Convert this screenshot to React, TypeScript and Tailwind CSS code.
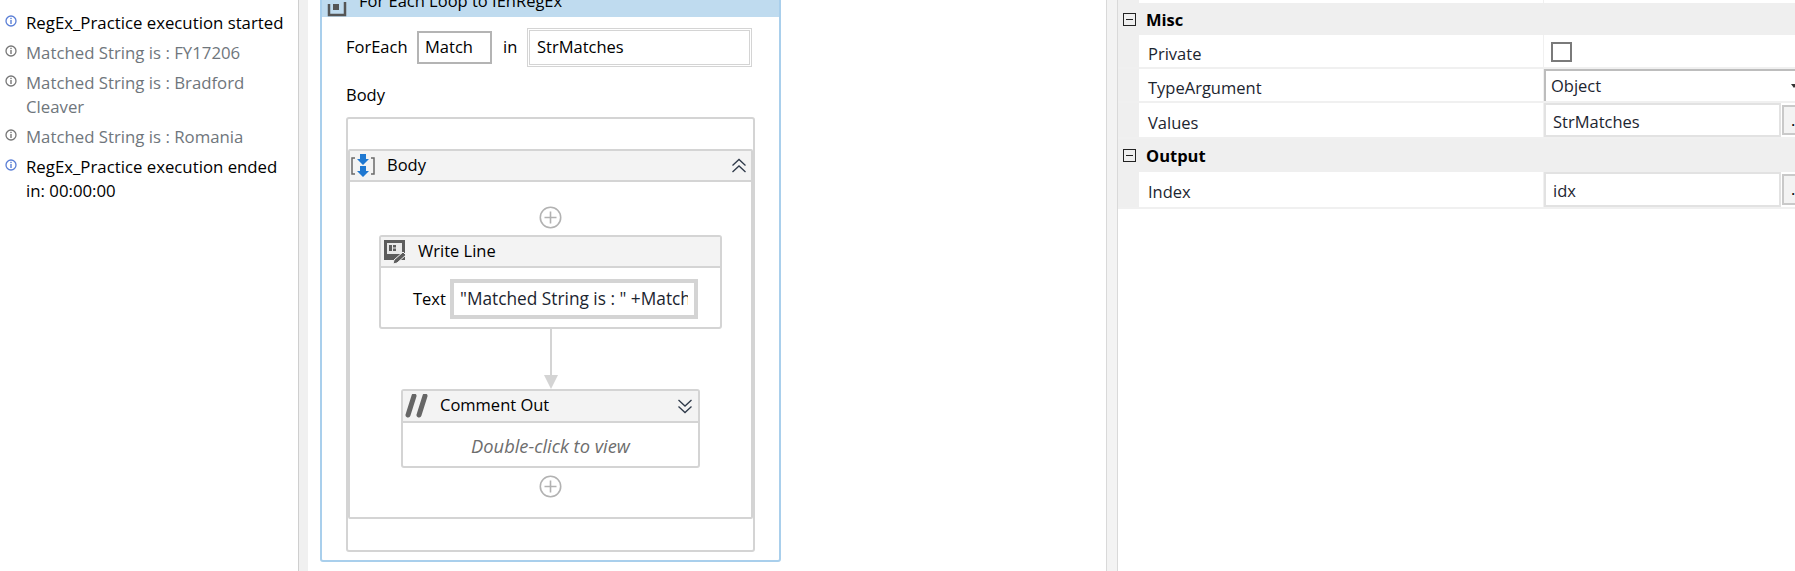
import type { ReactNode } from "react";

function InfoIcon({ active }: { active: boolean }) {
  const c = active ? "#5b7fd6" : "#777777";
  return (
    <svg width="12" height="12" viewBox="0 0 12 12" className="shrink-0">
      <circle cx="6" cy="6" r="5" fill="white" stroke={c} strokeWidth="1.3" />
      <rect x="5.3" y="5" width="1.4" height="4" fill={c} />
      <rect x="5.3" y="2.8" width="1.4" height="1.3" fill={c} />
    </svg>
  );
}

function LogRow({ active, children }: { active?: boolean; children: ReactNode }) {
  return (
    <div className={`flex ${active ? "text-black" : "text-[#6f767c]"}`}>
      <div className="w-[21px] shrink-0 pt-[5px]">
        <InfoIcon active={!!active} />
      </div>
      <div className="w-[265px] pt-px text-[16.8px] leading-[24px]">{children}</div>
    </div>
  );
}

function PlusCircle() {
  return (
    <svg width="23" height="23" viewBox="0 0 23 23" className="shrink-0">
      <circle cx="11.500" cy="11.500" r="10.200" fill="white" stroke="#b2b2b2" strokeWidth="1.600" />
      <path d="M11.500 5.500v12M5.500 11.500h12" stroke="#b2b2b2" strokeWidth="1.600" />
    </svg>
  );
}

function Chevrons({ up }: { up?: boolean }) {
  return (
    <svg width="16" height="16" viewBox="0 0 16 16" className={`shrink-0 ${up ? "" : "rotate-180"}`}>
      <path d="M1.500 7.500 8 1.500l6.500 6M1.500 14 8 8l6.500 6" fill="none" stroke="#2f3a4a" strokeWidth="1.300" />
    </svg>
  );
}

function BodyIcon() {
  return (
    <svg width="26" height="26" viewBox="0 0 26 26" className="shrink-0">
      <path d="M5 5H2v16h3M21 5h3v16h-3" fill="none" stroke="#6a6a6a" strokeWidth="1.500" />
      <path d="M10 1h6v5h3l-6 6-6-6h3z" fill="#1f78d1" />
      <path d="M10 13h6v5h3l-6 6-6-6h3z" fill="#1f78d1" />
    </svg>
  );
}

function WriteLineIcon() {
  return (
    <svg width="23" height="24" viewBox="0 0 23 24" className="shrink-0">
      <rect x="0" y="0" width="21" height="20" fill="#5c5c5c" />
      <rect x="3" y="3" width="15" height="11" fill="#e8e8e8" />
      <path d="M5 5h3v6H5zM9 5h3v2.500H9zM9 8.500h3V11H9z" fill="#5c5c5c" />
      <path d="m10 20 9-8 3 3-9 8-4 1z" fill="#5c5c5c" stroke="#f3f3f3" strokeWidth="1" />
    </svg>
  );
}

function CommentIcon() {
  return (
    <svg width="24" height="24" viewBox="0 0 24 24" className="shrink-0">
      <path d="M9 2 3 21M20 2l-6 19" stroke="#666666" strokeWidth="5" strokeLinecap="round" />
    </svg>
  );
}

function ForEachIcon() {
  return (
    <svg width="20" height="31" viewBox="0 0 20 31" className="shrink-0">
      <path d="M2 18v11h16V16" fill="none" stroke="#555555" strokeWidth="2.500" />
      <path d="M6 18h6v6H6z" fill="#555555" />
    </svg>
  );
}

function MinusBox() {
  return (
    <div className="flex h-[13px] w-[13px] items-center justify-center border border-[#222222] bg-[#efefef]">
      <div className="h-px w-[7px] bg-[#222222]" />
    </div>
  );
}

function SectionRow({ label, height }: { label: string; height: string }) {
  return (
    <div className={`flex items-center bg-[#efefef] ${height}`}>
      <div className="flex w-[28px] shrink-0 justify-start pl-[5px]">
        <MinusBox />
      </div>
      <span className="pt-[2px] font-bold text-black">{label}</span>
    </div>
  );
}

function PropRow({ label, height, children }: { label: string; height: string; children: ReactNode }) {
  return (
    <div className={`flex border-b-2 border-[#f0f0f0] ${height}`}>
      <div className="w-[21px] shrink-0 bg-[#efefef]" />
      <div className="flex w-[404px] shrink-0 items-center border-l-2 border-white pl-[7px] pt-[6px] text-[#1c2530]">{label}</div>
      <div className="flex flex-1 border-l border-[#f0f0f0]">{children}</div>
    </div>
  );
}

function ExprValue({ text }: { text: string }) {
  return (
    <>
      <div className="flex w-[237px] items-center border-2 border-[#e2e2e2] pl-[7px] pt-[4px] text-[#1c2530]">{text}</div>
      <div className="my-[2px] ml-px flex flex-1 items-center border-2 border-[#c9c9c9] bg-[#f3f3f3] pl-[7px] text-black">.</div>
    </>
  );
}

export default function App() {
  return (
    <div className="flex h-[571px] w-[1795px] overflow-hidden bg-white font-['Open_Sans',sans-serif] text-[16.5px] text-black">
      <aside className="flex w-[298px] shrink-0 flex-col gap-[5px] pl-[5px] pt-[10px]">
        <LogRow active>RegEx_Practice execution started</LogRow>
        <LogRow>Matched String is : FY17206</LogRow>
        <LogRow>Matched String is : Bradford Cleaver</LogRow>
        <LogRow>Matched String is : Romania</LogRow>
        <LogRow active>RegEx_Practice execution ended in: 00:00:00</LogRow>
      </aside>
      <div className="w-[10px] shrink-0 border-l border-[#cfcfcf] bg-[#f0f0f0]" />

      <main className="w-[798px] shrink-0 pl-[12px]">
        <div className="-mt-[16px] flex h-[578px] w-[461px] flex-col rounded-[3px] border-2 border-[#a9cfec]">
          <div className="flex h-[31px] shrink-0 items-center gap-[12px] bg-[#bfdbef] pl-[5px]">
            <ForEachIcon />
            <span>For Each Loop to IEnRegEx</span>
          </div>

          <div className="mt-[11px] flex h-[39px] items-center pl-[24px]">
            <span className="w-[71px]">ForEach</span>
            <div className="flex h-[33px] w-[75px] items-center border-2 border-[#b4b4b4] pl-[6px]">Match</div>
            <span className="ml-[11px] w-[24px]">in</span>
            <div className="flex h-[39px] w-[225px] items-center border-[3px] border-double border-[#d4d4d4] pl-[7px]">StrMatches</div>
          </div>

          <div className="mt-[16px] pl-[24px] leading-[24px]">Body</div>

          <div className="ml-[24px] mt-[10px] h-[435px] w-[409px] rounded-[3px] border-2 border-[#d4d4d4] pt-[30px]">
            <div className="mx-auto flex h-[370px] w-[405px] flex-col items-center rounded-[2px] border-2 border-[#d4d4d4]">
              <div className="flex h-[31px] w-full shrink-0 items-center border-b-2 border-[#d4d4d4] bg-[#f3f3f3] pr-[4px]">
                <BodyIcon />
                <span className="ml-[11px] flex-1">Body</span>
                <Chevrons up />
              </div>

              <div className="mt-[24px]">
                <PlusCircle />
              </div>

              <div className="mt-[6px] h-[94px] w-[343px] shrink-0 rounded-[3px] border-2 border-[#d4d4d4]">
                <div className="flex h-[31px] items-center border-b-2 border-[#d4d4d4] bg-[#f3f3f3] pl-[3px]">
                  <WriteLineIcon />
                  <span className="ml-[11px]">Write Line</span>
                </div>
                <div className="flex items-center pl-[32px] pt-[11px]">
                  <span className="w-[37px]">Text</span>
                  <div className="flex h-[40px] w-[248px] items-center overflow-hidden border-[4px] border-[#d4d4d4] px-[6px]">
                    <span className="block w-full overflow-hidden whitespace-nowrap text-[17.3px] text-[#1c2530]">"Matched String is : " +Match.Value</span>
                  </div>
                </div>
              </div>

              <div className="h-[47px] w-[2px] shrink-0 bg-[#d4d4d4]" />
              <svg width="14" height="14" viewBox="0 0 14 14" className="-mt-px shrink-0">
                <path d="M0 0h14L7 14z" fill="#d4d4d4" />
              </svg>

              <div className="h-[79px] w-[299px] shrink-0 rounded-[3px] border-2 border-[#d4d4d4]">
                <div className="flex h-[32px] items-center border-b-2 border-[#d4d4d4] bg-[#f3f3f3] pl-[2px] pr-[5px]">
                  <CommentIcon />
                  <span className="ml-[11px] flex-1 -translate-y-px">Comment Out</span>
                  <Chevrons />
                </div>
                <div className="flex h-[43px] items-center justify-center pt-[2px] text-[18.3px] italic text-[#6d6d6d]">Double-click to view</div>
              </div>

              <div className="mt-[7px]">
                <PlusCircle />
              </div>
            </div>
          </div>
        </div>
      </main>

      <div className="w-[12px] shrink-0 border-x border-[#d9d9d9] bg-[#f3f3f3]" />

      <section className="flex-1">
        <div className="flex h-[3px]">
          <div className="w-[21px] bg-[#efefef]" />
          <div className="w-[405px] border-r border-[#f0f0f0]" />
        </div>
        <SectionRow label="Misc" height="h-[32px]" />
        <PropRow label="Private" height="h-[34px]">
          <div className="ml-[7px] mt-[7px] h-[20px] w-[21px] border-2 border-[#7a7a7a]" />
        </PropRow>
        <PropRow label="TypeArgument" height="h-[34px]">
          <div className="flex flex-1 items-center justify-between border-l-2 border-t-2 border-[#bdbdbd] pl-[5px] text-[#1c2530]">
            <span>Object</span>
            <span className="h-0 w-0 border-x-[3px] border-t-[4px] border-x-transparent border-t-[#333333]" />
          </div>
        </PropRow>
        <PropRow label="Values" height="h-[36px]">
          <ExprValue text="StrMatches" />
        </PropRow>
        <SectionRow label="Output" height="h-[33px]" />
        <PropRow label="Index" height="h-[37px]">
          <ExprValue text="idx" />
        </PropRow>
      </section>
    </div>
  );
}
